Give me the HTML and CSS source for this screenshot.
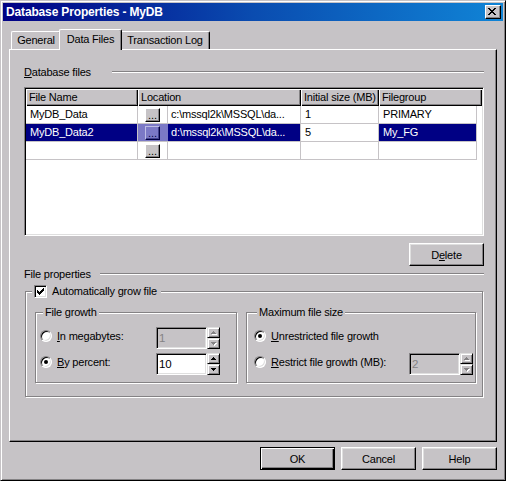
FILE: index.html
```html
<!DOCTYPE html>
<html>
<head>
<meta charset="utf-8">
<title>Database Properties - MyDB</title>
<link rel="stylesheet" href="styles.css">
</head>
<body>
<div class="window">
  <div class="titlebar">
    <span class="title">Database Properties - MyDB</span>
    <span class="close-btn">
      <svg width="8" height="7" viewBox="0 0 8 7" shape-rendering="crispEdges"><path fill="#000" d="M0 0h2v1h-2z M6 0h2v1h-2z M1 1h2v1h-2z M5 1h2v1h-2z M2 2h4v1h-4z M3 3h2v1h-2z M2 4h4v1h-4z M1 5h2v1h-2z M5 5h2v1h-2z M0 6h2v1h-2z M6 6h2v1h-2z"/></svg>
    </span>
  </div>
  <div class="client">
    <div class="tabs">
      <div class="tab t-general">General</div>
      <div class="tab t-data active">Data Files</div>
      <div class="tab t-log">Transaction Log</div>
    </div>
    <div class="panel">
      <div class="section-head">
        <span class="section-label db-label"><u>D</u>atabase files</span>
        <span class="etch-line"></span>
      </div>
      <div class="listview">
        <div class="lv-header">
          <div class="hcell c-name">File Name</div>
          <div class="hcell c-loc">Location</div>
          <div class="hcell c-size">Initial size (MB)</div>
          <div class="hcell c-fg-h">Filegroup</div>
        </div>
        <div class="lv-row">
          <div class="cell c-name">MyDB_Data</div>
          <div class="cell c-loc"><span class="btn-area"><span class="dots">...</span></span><span class="loc-text">c:\mssql2k\MSSQL\da...</span></div>
          <div class="cell c-size">1</div>
          <div class="cell c-fg">PRIMARY</div>
        </div>
        <div class="lv-row sel">
          <div class="cell c-name">MyDB_Data2</div>
          <div class="cell c-loc"><span class="btn-area"><span class="dots">...</span></span><span class="loc-text">d:\mssql2k\MSSQL\da...</span></div>
          <div class="cell c-size">5</div>
          <div class="cell c-fg">My_FG</div>
        </div>
        <div class="lv-row">
          <div class="cell c-name"></div>
          <div class="cell c-loc"><span class="btn-area"><span class="dots">...</span></span><span class="loc-text"></span></div>
          <div class="cell c-size"></div>
          <div class="cell c-fg"></div>
        </div>
      </div>
      <div class="delete-row">
        <button class="btn">D<u>e</u>lete</button>
      </div>
      <div class="section-head fp-head">
        <span class="section-label fp-label">File properties</span>
        <span class="etch-line"></span>
      </div>
      <div class="group outer-group">
        <div class="group-title check-title">
          <span class="check">
            <svg width="7" height="7" viewBox="0 0 7 7" shape-rendering="crispEdges"><path fill="#000" d="M0 2h1v3h-1z M1 3h1v3h-1z M2 4h1v3h-1z M3 3h1v3h-1z M4 2h1v3h-1z M5 1h1v3h-1z M6 0h1v3h-1z"/></svg>
          </span>
          <span class="check-label">Automatically <u>g</u>row file</span>
        </div>
        <div class="inner-row">
          <div class="group inner-group growth">
            <div class="group-title">File growth</div>
            <div class="opt-row first">
              <span class="opt"><span class="radio"></span><span><u>I</u>n megabytes:</span></span>
              <span class="spin disabled">
                <span class="edit">1</span>
                <span class="spinner">
                  <span class="spin-btn"><svg width="6" height="4" viewBox="0 0 6 4" shape-rendering="crispEdges"><path fill="#fff" d="M3 1h1v1h-1z M2 2h3v1h-3z M1 3h5v1h-5z"/><path fill="#848284" d="M2 0h1v1h-1z M1 1h3v1h-3z M0 2h5v1h-5z"/></svg></span>
                  <span class="spin-btn"><svg width="6" height="4" viewBox="0 0 6 4" shape-rendering="crispEdges"><path fill="#fff" d="M1 1h5v1h-5z M2 2h3v1h-3z M3 3h1v1h-1z"/><path fill="#848284" d="M0 0h5v1h-5z M1 1h3v1h-3z M2 2h1v1h-1z"/></svg></span>
                </span>
              </span>
            </div>
            <div class="opt-row">
              <span class="opt"><span class="radio on"></span><span><u>B</u>y percent:</span></span>
              <span class="spin">
                <span class="edit">10</span>
                <span class="spinner">
                  <span class="spin-btn"><svg width="5" height="3" viewBox="0 0 5 3" shape-rendering="crispEdges"><path fill="#000" d="M2 0h1v1h-1z M1 1h3v1h-3z M0 2h5v1h-5z"/></svg></span>
                  <span class="spin-btn"><svg width="5" height="3" viewBox="0 0 5 3" shape-rendering="crispEdges"><path fill="#000" d="M0 0h5v1h-5z M1 1h3v1h-3z M2 2h1v1h-1z"/></svg></span>
                </span>
              </span>
            </div>
          </div>
          <div class="group inner-group maxsize">
            <div class="group-title">Maximum file size</div>
            <div class="opt-row first">
              <span class="opt"><span class="radio on"></span><span><u>U</u>nrestricted file growth</span></span>
            </div>
            <div class="opt-row">
              <span class="opt"><span class="radio"></span><span><u>R</u>estrict file growth (MB):</span></span>
              <span class="spin disabled">
                <span class="edit">2</span>
                <span class="spinner">
                  <span class="spin-btn"><svg width="6" height="4" viewBox="0 0 6 4" shape-rendering="crispEdges"><path fill="#fff" d="M3 1h1v1h-1z M2 2h3v1h-3z M1 3h5v1h-5z"/><path fill="#848284" d="M2 0h1v1h-1z M1 1h3v1h-3z M0 2h5v1h-5z"/></svg></span>
                  <span class="spin-btn"><svg width="6" height="4" viewBox="0 0 6 4" shape-rendering="crispEdges"><path fill="#fff" d="M1 1h5v1h-5z M2 2h3v1h-3z M3 3h1v1h-1z"/><path fill="#848284" d="M0 0h5v1h-5z M1 1h3v1h-3z M2 2h1v1h-1z"/></svg></span>
                </span>
              </span>
            </div>
          </div>
        </div>
      </div>
    </div>
    <div class="button-row">
      <button class="btn default">OK</button>
      <button class="btn">Cancel</button>
      <button class="btn">Help</button>
    </div>
  </div>
</div>
</body>
</html>
```

FILE: styles.css
```css
* { box-sizing: border-box; }
html, body { margin: 0; padding: 0; }
body {
  width: 506px;
  height: 481px;
  overflow: hidden;
  background: #c6c3c6;
  font-family: "Liberation Sans", Arial, sans-serif;
  font-size: 11px;
  letter-spacing: -0.2px;
  color: #000;
}
u { text-decoration: underline; text-underline-offset: 1px; }

.window {
  width: 506px;
  height: 481px;
  background: #c6c3c6;
  border: 1px solid;
  border-color: #c6c3c6 #000 #000 #c6c3c6;
  box-shadow: inset 1px 1px #fff, inset -1px -1px #848284;
  padding: 2px;
  display: flex;
  flex-direction: column;
}

.titlebar {
  height: 18px;
  flex: none;
  display: flex;
  align-items: center;
  padding: 0 2px 0 3px;
  background: linear-gradient(to right, #000084 0%, #0a4cb0 50%, #1084d6 100%);
}
.title {
  flex: 1;
  color: #fff;
  font-weight: bold;
  font-size: 12px;
  letter-spacing: -0.15px;
  white-space: nowrap;
}
.close-btn {
  width: 16px;
  height: 14px;
  background: #c6c3c6;
  border: 1px solid;
  border-color: #fff #000 #000 #fff;
  box-shadow: inset -1px -1px #848284;
  display: flex;
  align-items: flex-start;
  justify-content: flex-start;
  padding: 2px 0 0 2px;
}
.close-btn svg { display: block; }

.client {
  flex: 1;
  display: flex;
  flex-direction: column;
  padding: 8px 6px 0 6px;
}

.tabs {
  height: 20px;
  flex: none;
  display: flex;
  align-items: flex-end;
  padding-left: 2px;
}
.tab {
  height: 18px;
  background: #c6c3c6;
  border-top: 1px solid #fff;
  border-left: 1px solid #fff;
  border-right: 1px solid #000;
  border-top-left-radius: 2px;
  border-top-right-radius: 2px;
  box-shadow: inset -1px 0 #848284;
  display: flex;
  align-items: center;
  justify-content: center;
  white-space: nowrap;
  padding-bottom: 1px;
}
.t-general { width: 50px; }
.t-data { width: 63px; margin: 0 -2px 0 -2px; }
.t-log { width: 90px; }
.tab.active {
  height: 21px;
  margin-bottom: -1px;
  position: relative;
  z-index: 2;
  padding-bottom: 3px;
}

.panel {
  height: 393px;
  flex: none;
  border: 1px solid;
  border-color: #fff #000 #000 #fff;
  box-shadow: inset -1px -1px #848284;
  padding: 15px 12px 0 14px;
  display: flex;
  flex-direction: column;
}

.section-head {
  height: 14px;
  line-height: 14px;
  display: flex;
  align-items: center;
  flex: none;
}
.section-label { white-space: nowrap; flex: none; }
.db-label { width: 88px; }
.fp-label { width: 76px; }
.etch-line {
  flex: 1;
  height: 2px;
  border-top: 1px solid #848284;
  border-bottom: 1px solid #fff;
}

.listview {
  margin-top: 8px;
  height: 149px;
  flex: none;
  background: #fff;
  border: 1px solid;
  border-color: #848284 #fff #fff #848284;
  box-shadow: inset 1px 1px #000, inset -1px -1px #dfdfdf;
  padding: 1px;
  overflow: hidden;
}
.lv-header { display: flex; height: 17px; }
.hcell {
  height: 17px;
  line-height: 16px;
  background: #c6c3c6;
  box-shadow: inset 1px 1px #fff, inset -1px -1px #000, inset -2px -2px #848284;
  padding-left: 3px;
  white-space: nowrap;
  overflow: hidden;
}
.c-name { width: 112px; flex: none; }
.c-loc { width: 163px; flex: none; }
.c-size { width: 78px; flex: none; }
.c-fg { width: 98px; flex: none; }
.c-fg-h { width: 103px; flex: none; }

.lv-row { display: flex; height: 18px; }
.cell {
  height: 18px;
  line-height: 17px;
  border-right: 1px solid #c6c3c6;
  border-bottom: 1px solid #c6c3c6;
  padding-left: 4px;
  white-space: nowrap;
  overflow: hidden;
}
.cell.c-loc { padding-left: 0; display: flex; }
.btn-area {
  width: 30px;
  flex: none;
  border-right: 1px solid #c6c3c6;
  display: flex;
  align-items: center;
  justify-content: center;
}
.loc-text { padding-left: 3px; flex: 1; white-space: nowrap; overflow: hidden; }
.dots {
  width: 15px;
  height: 14px;
  background: #c6c3c6;
  border: 1px solid;
  border-color: #fff #000 #000 #fff;
  box-shadow: inset -1px -1px #848284;
  display: flex;
  align-items: flex-end;
  justify-content: center;
  line-height: 9px;
  font-size: 11px;
  letter-spacing: 0;
  padding-bottom: 1px;
}
.lv-row.sel .cell { background: #000084; color: #fff; }
.lv-row.sel .cell.c-size { background: #fff; color: #000; }
.lv-row.sel .btn-area { background: #7b79c6; border-right-color: #7b79c6; }
.lv-row.sel .dots {
  background: #7b79c6;
  border-color: #bdbde6 #000042 #000042 #bdbde6;
  box-shadow: inset -1px -1px #42428c;
  color: #000042;
}

.delete-row {
  margin-top: 7px;
  display: flex;
  justify-content: flex-end;
  flex: none;
}
.btn {
  width: 75px;
  height: 23px;
  background: #c6c3c6;
  border: 1px solid;
  border-color: #fff #000 #000 #fff;
  box-shadow: inset -1px -1px #848284, inset 1px 1px #dfdfdf;
  font-family: inherit;
  font-size: 11px;
  letter-spacing: -0.2px;
  color: #000;
  padding: 0;
  margin: 0;
  display: flex;
  align-items: center;
  justify-content: center;
}
.btn.default {
  border-color: #000;
  box-shadow: inset 1px 1px #fff, inset -1px -1px #000, inset -2px -2px #848284;
}

.fp-head { margin-top: 1px; }

.group {
  border: 1px solid #848284;
  box-shadow: inset 1px 1px #fff, 1px 1px #fff;
  display: flex;
  flex-direction: column;
}
.outer-group {
  margin: 10px 1px 0 1px;
  height: 106px;
  flex: none;
}
.group-title {
  align-self: flex-start;
  height: 13px;
  line-height: 13px;
  margin-top: -7px;
  margin-left: 3px;
  padding: 0 2px;
  background: #c6c3c6;
  white-space: nowrap;
}
.check-title {
  display: flex;
  align-items: center;
  margin-left: 6px;
  padding: 0 4px 0 2px;
}
.check {
  width: 13px;
  height: 13px;
  background: #fff;
  border: 1px solid;
  border-color: #848284 #fff #fff #848284;
  box-shadow: inset 1px 1px #000, inset -1px -1px #dfdfdf;
  display: flex;
  align-items: center;
  justify-content: center;
  margin-right: 5px;
  flex: none;
}
.check svg { display: block; }

.inner-row {
  display: flex;
  margin-top: 14px;
  padding-left: 9px;
}
.inner-group { height: 71px; flex: none; }
.growth { width: 202px; margin-right: 9px; padding-left: 4px; }
.maxsize { width: 230px; padding-left: 7px; }

.opt-row {
  display: flex;
  align-items: flex-start;
  height: 22px;
  margin-top: 4px;
}
.opt-row.first { margin-top: 8px; }
.opt {
  height: 17px;
  display: flex;
  align-items: center;
  gap: 5px;
  white-space: nowrap;
  flex: none;
}
.growth .opt { width: 116px; }
.maxsize .opt { width: 155px; }
.radio {
  width: 12px;
  height: 12px;
  border-radius: 50%;
  background: #fff;
  border: 1px solid;
  border-color: #848284 #fff #fff #848284;
  box-shadow: inset 1px 1px #000, inset -1px -1px #dfdfdf;
  display: flex;
  align-items: center;
  justify-content: center;
  flex: none;
}
.radio.on::after {
  content: "";
  width: 4px;
  height: 4px;
  border-radius: 50%;
  background: #000;
}

.spin { display: flex; height: 22px; flex: none; }
.edit {
  width: 51px;
  height: 22px;
  background: #fff;
  border: 1px solid;
  border-color: #848284 #fff #fff #848284;
  box-shadow: inset 1px 1px #000, inset -1px -1px #dfdfdf;
  padding-left: 2px;
  line-height: 20px;
  font-size: 11.5px;
}
.spin.disabled .edit { background: #c6c3c6; color: #848284; }
.spinner {
  width: 13px;
  height: 22px;
  display: flex;
  flex-direction: column;
}
.spin-btn {
  height: 11px;
  background: #c6c3c6;
  border: 1px solid;
  border-color: #dfdfdf #000 #000 #dfdfdf;
  box-shadow: inset 1px 1px #fff, inset -1px -1px #848284;
  display: flex;
  align-items: center;
  justify-content: center;
}
.spin-btn svg { display: block; }

.button-row {
  margin-top: 5px;
  display: flex;
  justify-content: flex-end;
  gap: 6px;
  flex: none;
}
```
